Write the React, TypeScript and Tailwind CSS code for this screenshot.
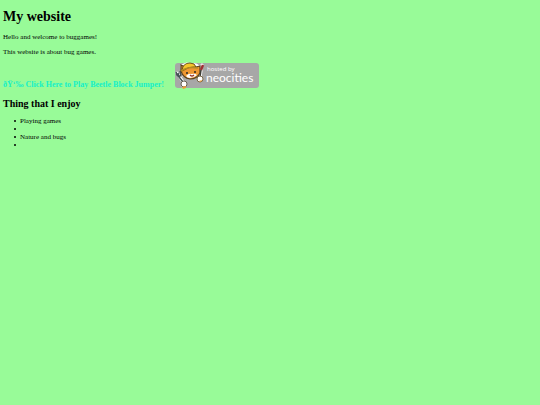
const things = ['Playing games', '', 'Nature and bugs', '']

const NeocitiesBadge = () => {
    return (
        <svg
            viewBox="0 0 84 27"
            className="block w-[84px] h-[27px]"
            role="img"
            aria-label="Hosted by Neocities"
        >
            <rect x="0" y="1" width="84" height="25" rx="3" fill="#a7a7a7" />
            {/* white outline round the cat */}
            <g stroke="#fff" strokeWidth="3" strokeLinecap="round" strokeLinejoin="round" fill="#fff">
                <path d="M2 11 L4 14 L9 21 L8 24" />
                <path d="M27 3 L26 9 L25 16" />
                <path d="M7 4 L12 2 L21 3 L24 5 L22 13 L14 15 L8 13Z" />
            </g>
            {/* fork */}
            <path d="M1 10 L2 13 L4 15 L6 13 L5 9 M3 11 L4 15 L8 20" stroke="#465256" strokeWidth="1.5" fill="none" />
            {/* face */}
            <path d="M6 9 L6 3 L10 5 Q15 3 21 5 L25 4 L25 11 Q22 17 15 17 Q8 16 6 9Z" fill="#ee9733" stroke="#58401f" strokeWidth="1.2" />
            <path d="M11 14 Q14 11 16 12 Q20 11 22 13 Q19 16 15 16 Q12 16 11 14Z" fill="#fff" />
            <path d="M7 8 Q8 1 15 1 Q20 1 21 5 Q14 4 7 9Z" fill="#f5c52b" stroke="#6c521c" strokeWidth="1" />
            <path d="M6 9 Q13 4 23 6" stroke="#b58a20" strokeWidth="1.6" fill="none" />
            <circle cx="12" cy="11" r="1" fill="#2d2722" />
            <circle cx="20" cy="10" r="1" fill="#2d2722" />
            <path d="M15 13 Q17 15 19 13" stroke="#983a2a" strokeWidth="1.2" fill="none" />
            {/* paws */}
            <ellipse cx="9" cy="22" rx="3" ry="3" fill="#fff" stroke="#5c5344" strokeWidth="0.9" />
            <path d="M7 25 L11 24 L11 26 L8 27Z" fill="#ed9a34" />
            <path d="M28 3 L26 8" stroke="#9e3034" strokeWidth="2.5" />
            <path d="M26 8 L25 15" stroke="#3e3c35" strokeWidth="1.5" />
            <ellipse cx="25" cy="17" rx="3" ry="3" fill="#fff" stroke="#705d39" strokeWidth="0.9" />
            <path d="M24 19 L27 18 L26 20Z" fill="#ed9a34" />
            <text x="32" y="9" fill="#fff" className="font-['Open_Sans',sans-serif] text-[6px]">hosted by</text>
            <text x="31" y="20" fill="#fff" className="font-['Lato',sans-serif] text-[12px]">neocities</text>
        </svg>
    )
}

const App = () => {
    return (
        <main className="min-h-screen bg-[#98fb98] px-[3px] pt-[9px] font-['Liberation_Serif',serif] text-[7px] leading-[8px] text-black">
            <h1 className="text-[14px] leading-4 font-bold">My website</h1>
            <p className="mt-2">Hello and welcome to buggames!</p>
            <p className="mt-[7px]">This website is about bug games.</p>
            <div className="mt-[6px] flex items-end gap-[11px]">
                <a href="#play" className="text-[8px] font-bold text-[#14f0c8]">
                    ðŸ‘‰ Click Here to Play Beetle Block Jumper!
                </a>
                <a href="#neocities">
                    <NeocitiesBadge />
                </a>
            </div>
            <h2 className="mt-[9px] text-[10px] leading-3 font-bold">Thing that I enjoy</h2>
            <ul className="mt-[7px] pl-[11px]">
                {things.map((thing, index) => (
                    <li key={index} className="flex h-2 items-center gap-1 before:size-[2px] before:rounded-full before:bg-black before:content-['']">
                        {thing}
                    </li>
                ))}
            </ul>
        </main>
    )
}

export default App
